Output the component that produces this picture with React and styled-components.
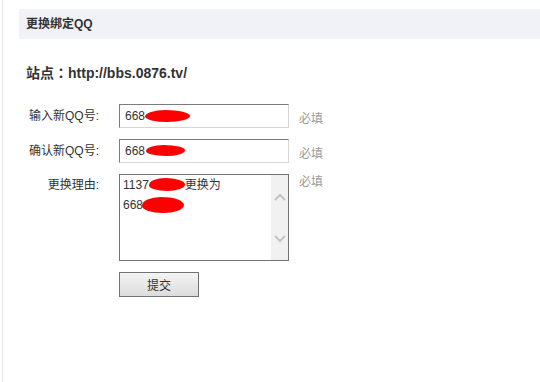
import React from 'react'
import styled, { createGlobalStyle } from 'styled-components'

const GlobalStyle = createGlobalStyle`
  html, body {
    margin: 0;
    padding: 0;
    background: #fff;
  }
  body {
    font-family: "Liberation Sans", "Noto Sans CJK SC", sans-serif;
    font-size: 12px;
    color: #333;
  }
`

const Page = styled.div`
  margin-left: 2px;
  border-left: 1px solid #e3e6ee;
  min-height: 382px;
  box-sizing: border-box;
  padding: 9px 0 0 16px;
`

const Header = styled.div`
  height: 30px;
  line-height: 30px;
  background: #f1f2f7;
  padding-left: 7px;
  font-size: 12px;
  font-weight: bold;
  color: #333;
`

const Site = styled.div`
  margin-top: 24px;
  padding-left: 7px;
  line-height: 20px;
  font-size: 14px;
  font-weight: bold;
  color: #333;
  font-family: "Liberation Sans", "Noto Sans CJK TC", sans-serif;
`

const Form = styled.div`
  margin-top: 21px;
  padding-left: 7px;
  display: flex;
  flex-direction: column;
  gap: 11px;
`

const Row = styled.div`
  display: flex;
  align-items: flex-start;
`

const Label = styled.div`
  width: 73px;
  margin-right: 20px;
  text-align: right;
  line-height: ${p => (p.$top ? '20px' : '24px')};
  padding-top: ${p => (p.$top ? '1px' : '0')};
  color: #333;
`

const Field = styled.div`
  width: 170px;
  height: 24px;
  box-sizing: border-box;
  border: 1px solid;
  border-color: #7b7b7b #d6d6d6 #d6d6d6 #7b7b7b;
  padding-left: 5px;
  line-height: 22px;
  white-space: nowrap;
  overflow: hidden;
  color: #333;
`

const Area = styled.div`
  width: 170px;
  height: 87px;
  box-sizing: border-box;
  border: 1px solid #737373;
  display: flex;
`

const AreaText = styled.div`
  flex: 1;
  padding: 0 3px;
  line-height: 20px;
  color: #333;
`

const Scrollbar = styled.div`
  width: 17px;
  background: #f1f1f1;
  display: flex;
  flex-direction: column;
  justify-content: space-between;
  align-items: center;
  padding: 18px 0 17px;
`

const Hint = styled.div`
  margin-left: 10px;
  padding-top: ${p => (p.$top ? '0' : '7px')};
  line-height: 17px;
  color: #999;
`

const Redact = styled.span`
  display: inline-block;
  vertical-align: middle;
  width: ${p => p.$w}px;
  height: ${p => p.$h}px;
  margin-left: ${p => p.$ml || 0}px;
  margin-top: ${p => p.$mt || 0}px;
  background: #ff0000;
  border-radius: 45% 55% 50% 50% / 55% 50% 50% 45%;
`

const Submit = styled.button`
  margin-left: 93px;
  width: 80px;
  height: 25px;
  border: 1px solid #727272;
  background: linear-gradient(#f4f4f4, #dcdcdc);
  font-family: inherit;
  font-size: 12px;
  color: #333;
  padding: 0;
`

const Chevron = ({ up }) => (
  <svg width="12" height="8" viewBox="0 0 12 8">
    <path
      d={up ? 'M1 7 L6 2 L11 7' : 'M1 1 L6 6 L11 1'}
      fill="none"
      stroke="#c4c4c4"
      strokeWidth="2"
    />
  </svg>
)

const App = () => {
  return (
    <>
      <GlobalStyle />
      <Page>
        <Header>更换绑定QQ</Header>
        <Site>站点：http://bbs.0876.tv/</Site>
        <Form>
          <Row>
            <Label>输入新QQ号:</Label>
            <Field>
              668<Redact $w={45} $h={12} $mt={-2} />
            </Field>
            <Hint>必填</Hint>
          </Row>
          <Row>
            <Label>确认新QQ号:</Label>
            <Field>
              668<Redact $w={39} $h={11} $ml={1} $mt={-2} />
            </Field>
            <Hint>必填</Hint>
          </Row>
          <Row>
            <Label $top>更换理由:</Label>
            <Area>
              <AreaText>
                1137<Redact $w={36} $h={13} $mt={-3} />更换为
                <br />
                668<Redact $w={42} $h={16} $ml={-1} $mt={-1} />
              </AreaText>
              <Scrollbar>
                <Chevron up />
                <Chevron />
              </Scrollbar>
            </Area>
            <Hint $top>必填</Hint>
          </Row>
          <Submit>提交</Submit>
        </Form>
      </Page>
    </>
  )
}

export default App
